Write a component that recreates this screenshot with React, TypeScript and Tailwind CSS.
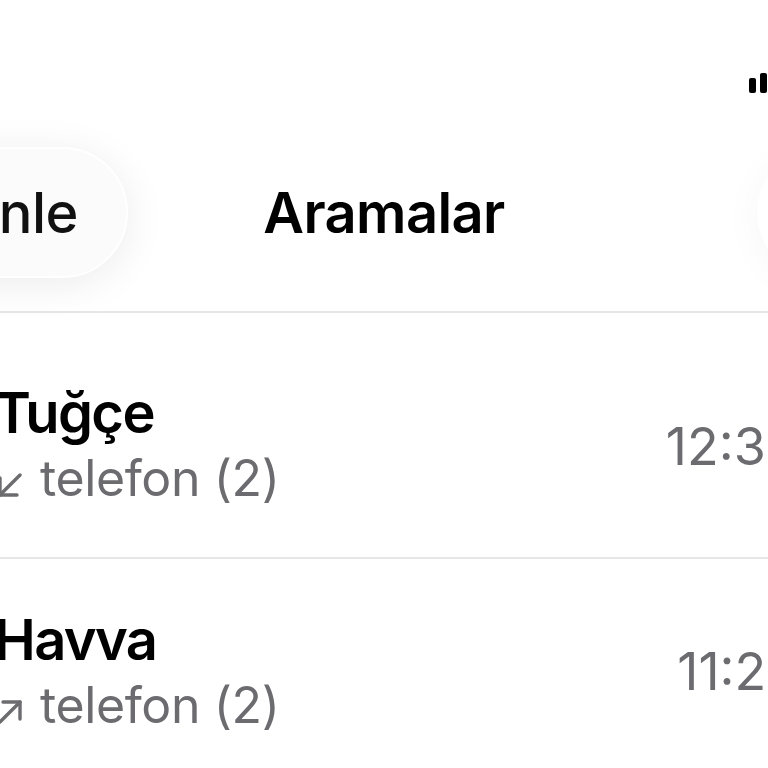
import React from "react";

type Call = {
  name: string;
  kind: "in" | "out";
  label: string;
  time: string;
  rowPad: string;
  timePad: string;
};

const calls: Call[] = [
  { name: "Tuğçe", kind: "in", label: "telefon (2)", time: "12:39", rowPad: "pt-[68px] pb-[49px]", timePad: "mt-[5px]" },
  { name: "Havva", kind: "out", label: "telefon (2)", time: "11:22", rowPad: "pt-[49px] pb-[49px]", timePad: "" },
];

function CallArrow({ kind }: { kind: "in" | "out" }) {
  // incoming = down-left, outgoing = up-right
  return (
    <svg width="24" height="24" viewBox="0 0 24 24" fill="none" stroke="#6c6c70" strokeWidth="3.4" strokeLinecap="round" strokeLinejoin="round" className="shrink-0 mt-[25px]">
      {kind === "in" ? (
        <>
          <path d="M22 2 L2 22" />
          <path d="M2 5 V22 H19" />
        </>
      ) : (
        <>
          <path d="M2 22 L22 2" />
          <path d="M5 2 H22 V19" />
        </>
      )}
    </svg>
  );
}

function StatusIcons() {
  return (
    <div className="flex items-center gap-[14px]">
      <div className="flex items-end gap-[4px]">
        <div className="w-[7px] h-[15px] rounded-[2px] bg-black" />
        <div className="w-[7px] h-[20px] rounded-[2px] bg-black" />
        <div className="w-[7px] h-[25px] rounded-[2px] bg-black" />
        <div className="w-[7px] h-[30px] rounded-[2px] bg-black" />
      </div>
      <svg width="40" height="28" viewBox="0 0 40 28" fill="black">
        <path d="M20 28 L13 20 A10 10 0 0 1 27 20 Z" />
        <path d="M3 11 A24 24 0 0 1 37 11 L33 15 A18 18 0 0 0 7 15 Z" />
      </svg>
      <div className="w-[90px] h-[30px] rounded-[9px] border-2 border-black/40 p-[3px]">
        <div className="h-full w-[70%] rounded-[5px] bg-black" />
      </div>
    </div>
  );
}

export default function App() {
  return (
    <div className="w-[768px] h-[768px] overflow-hidden bg-white font-['Inter','Liberation_Sans',sans-serif]">
      <div className="w-[1208px] ml-[-220px]">
        {/* status bar */}
        <div className="h-[147px] flex justify-end items-start pt-[63px] pr-[41px]">
          <StatusIcons />
        </div>

        {/* nav bar */}
        <div className="pb-[33px] border-b-2 border-[#e6e6e6]">
          <div className="h-[131px] grid grid-cols-[1fr_auto_1fr] items-center px-[41px]">
            <button className="justify-self-start w-[307px] h-[131px] rounded-full bg-[#fbfbfb] border-2 border-white shadow-[0_6px_40px_rgba(0,0,0,0.08)] flex items-center justify-end pr-[48px] text-[56px] font-medium text-[#111] leading-none tracking-[-0.5px]">
              Düzenle
            </button>
            <h1 className="text-[56px] font-semibold text-black leading-none tracking-[-0.6px]">Aramalar</h1>
            <button className="justify-self-end w-[190px] h-[131px] rounded-full bg-white shadow-[0_6px_40px_rgba(0,0,0,0.04)]" />
          </div>
        </div>

        {/* recents */}
        <div>
          {calls.map((c) => (
            <div key={c.name} className="flex items-center pl-[41px]">
              <div className="w-[150px] h-[150px] rounded-full bg-[#d1d1d6] shrink-0 mr-[23px]" />
              <div className={`flex-1 flex items-center justify-between pr-[190px] border-b-2 border-[#e6e6e6] ${c.rowPad}`}>
                <div>
                  <div className="text-[56px] leading-[64px] font-semibold text-black tracking-[-1.6px]">{c.name}</div>
                  <div className="mt-[3px] flex items-start gap-[18px] pl-[4px] text-[50px] leading-[60px] text-[#6c6c70] tracking-[-0.4px]">
                    <CallArrow kind={c.kind} />
                    <span>{c.label}</span>
                  </div>
                </div>
                <div className={`text-[52px] leading-[60px] text-[#6c6c70] ${c.timePad}`}>{c.time}</div>
              </div>
            </div>
          ))}
        </div>
      </div>
    </div>
  );
}
